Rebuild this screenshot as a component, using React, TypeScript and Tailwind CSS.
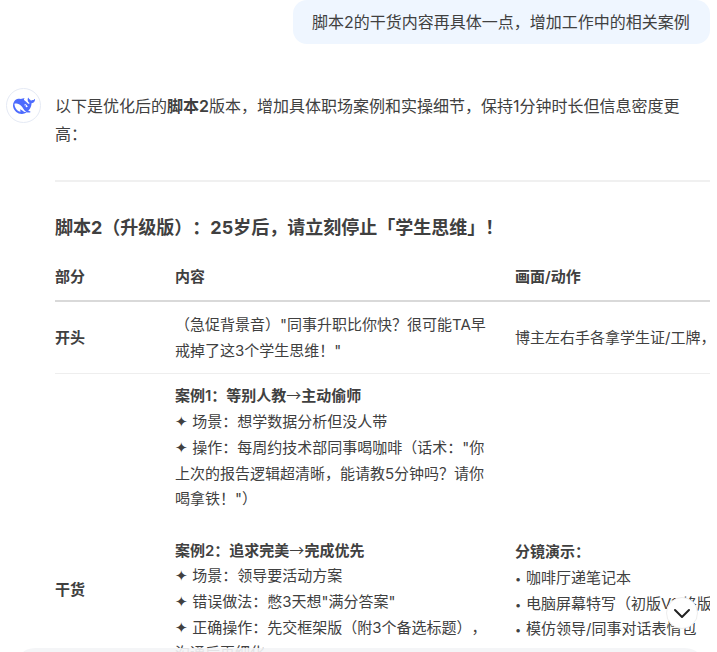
const whale = "M23.748 4.482c-.254-.124-.364.113-.512.234-.051.039-.094.09-.137.136-.372.397-.806.657-1.373.626-.829-.046-1.537.214-2.163.848-.133-.782-.575-1.248-1.247-1.548-.352-.156-.708-.311-.955-.65-.172-.241-.219-.51-.305-.774-.055-.16-.11-.323-.293-.35-.2-.031-.278.136-.356.276-.313.572-.434 1.202-.422 1.84.027 1.436.633 2.58 1.838 3.393.137.093.172.187.129.323-.082.28-.18.552-.266.833-.055.179-.137.217-.329.14a5.526 5.526 0 01-1.736-1.18c-.857-.828-1.631-1.742-2.597-2.458a11.365 11.365 0 00-.689-.471c-.985-.957.13-1.743.388-1.836.27-.098.093-.432-.779-.428-.872.004-1.67.295-2.687.684a3.055 3.055 0 01-.465.137 9.597 9.597 0 00-2.883-.102c-1.885.21-3.39 1.102-4.497 2.623C.082 8.606-.231 10.684.152 12.85c.403 2.284 1.569 4.175 3.36 5.653 1.858 1.533 3.997 2.284 6.438 2.14 1.482-.085 3.133-.284 4.994-1.86.47.234.962.327 1.78.397.63.059 1.236-.03 1.705-.128.735-.156.684-.837.419-.961-2.155-1.004-1.682-.595-2.113-.926 1.096-1.296 2.746-2.642 3.392-7.003.05-.347.007-.565 0-.845-.004-.17.035-.237.23-.256a4.173 4.173 0 001.545-.475c1.396-.763 1.96-2.015 2.093-3.517.02-.23-.004-.467-.247-.588zM11.581 18c-2.089-1.642-3.102-2.183-3.52-2.16-.392.024-.321.471-.235.763.09.288.207.486.371.739.114.167.192.416-.113.603-.673.416-1.842-.14-1.897-.167-1.361-.802-2.5-1.86-3.301-3.307-.774-1.393-1.224-2.887-1.298-4.482-.02-.386.093-.522.477-.592a4.696 4.696 0 011.529-.039c2.132.312 3.946 1.265 5.468 2.774.868.86 1.525 1.887 2.202 2.891.72 1.066 1.494 2.082 2.48 2.914.348.292.625.514.891.677-.802.09-2.14.11-3.054-.614zm1-6.44a.306.306 0 01.415-.287.302.302 0 01.2.288.306.306 0 01-.31.307.303.303 0 01-.304-.308zm3.11 1.596c-.2.081-.399.151-.59.16a1.245 1.245 0 01-.798-.254c-.274-.23-.47-.358-.552-.758a1.73 1.73 0 01.016-.588c.07-.327-.008-.537-.239-.727-.187-.156-.426-.199-.688-.199a.559.559 0 01-.254-.078c-.11-.054-.2-.19-.114-.358.028-.054.16-.186.192-.21.356-.202.767-.136 1.146.016.352.144.618.408 1.001.782.391.451.462.576.685.914.176.265.336.537.445.848.067.195-.019.354-.25.452z";

function Bullet({ children }: { children: string }) {
  return (
    <p className="flex h-[25.7px] items-baseline">
      <span className="w-[11px] shrink-0 text-[11px] leading-none">•</span>
      <span>{children}</span>
    </p>
  );
}

function Arrow() {
  return <span className="font-normal leading-none font-['Noto_Sans_CJK_SC',sans-serif]">→</span>;
}

export default function App() {
  return (
    <div className="relative h-[652px] w-[717px] overflow-hidden bg-white text-[#404040] font-['Inter','Noto_Sans_CJK_SC',sans-serif] [text-spacing-trim:space-all]">
      <div className="flex justify-end pr-[7px]">
        <div className="h-[44px] w-[417px] rounded-[14px] bg-[#eff6ff] pl-[19px] text-[16px] leading-[44px] whitespace-nowrap">
          脚本2的干货内容再具体一点，增加工作中的相关案例
        </div>
      </div>
      <div className="mt-[48px] flex pl-[6px] pr-[7px]">
        <div className="-mt-[4px] flex h-[35px] w-[35px] shrink-0 items-center justify-center rounded-full border border-[#e5eaf5] bg-white">
          <svg viewBox="0 0 24 24" className="h-[22px] w-[22px]" fill="#4d6bfe"><path d={whale} /></svg>
        </div>
        <div className="ml-[14px] min-w-0 flex-1">
          <p className="text-[16px] leading-[28px]">
            以下是优化后的<b className="font-semibold">脚本2</b>版本，增加具体职场案例和实操细节，保持1分钟时长但信息密度更高：
          </p>
          <div className="mt-[32px] h-[2px] bg-[#f0f0f0]" />
          <h3 className="mt-[32px] text-[18px] leading-[28px] font-bold whitespace-nowrap">
            脚本2（升级版）：25岁后，请立刻停止「学生思维」！
          </h3>
          <div className="mt-[12px] overflow-hidden">
            <table className="w-[800px] table-fixed border-collapse text-[15px] leading-[25.7px]">
              <colgroup>
                <col className="w-[120px]" />
                <col className="w-[340px]" />
                <col className="w-[340px]" />
              </colgroup>
              <thead>
                <tr className="h-[47px] border-b-2 border-[#d9d9d9] text-left">
                  <th className="font-semibold">部分</th>
                  <th className="font-semibold">内容</th>
                  <th className="font-semibold">画面/动作</th>
                </tr>
              </thead>
              <tbody>
                <tr className="border-b border-[#eeeeee]">
                  <td className="font-semibold">开头</td>
                  <td className="py-[10px] pr-[26px]">（急促背景音）"同事升职比你快？很可能TA早戒掉了这3个学生思维！"</td>
                  <td className="whitespace-nowrap">博主左右手各拿学生证/工牌，切换对比画面</td>
                </tr>
                <tr className="h-[432px]">
                  <td className="font-semibold">干货</td>
                  <td className="pt-[9px] pr-[26px] align-top">
                    <p className="font-semibold">案例1：等别人教<Arrow />主动偷师</p>
                    <p>✦ 场景：想学数据分析但没人带</p>
                    <p>✦ 操作：每周约技术部同事喝咖啡（话术："你上次的报告逻辑超清晰，能请教5分钟吗？请你喝拿铁！"）</p>
                    <p className="mt-[25.7px] font-semibold">案例2：追求完美<Arrow />完成优先</p>
                    <p>✦ 场景：领导要活动方案</p>
                    <p>✦ 错误做法：憋3天想"满分答案"</p>
                    <p>✦ 正确操作：先交框架版（附3个备选标题），沟通后再细化</p>
                  </td>
                  <td className="pt-[1px] align-middle whitespace-nowrap">
                    <p className="font-semibold">分镜演示：</p>
                    <Bullet>咖啡厅递笔记本</Bullet>
                    <Bullet>电脑屏幕特写（初版V1 终版）</Bullet>
                    <Bullet>模仿领导/同事对话表情包</Bullet>
                  </td>
                </tr>
              </tbody>
            </table>
          </div>
        </div>
      </div>
      <button className="absolute left-[666px] top-[597px] flex h-[32px] w-[32px] items-center justify-center rounded-full border border-[#eeeeee] bg-white">
        <svg viewBox="0 0 24 24" className="h-[24px] w-[24px]" fill="none" stroke="#222" strokeWidth="2" strokeLinecap="round" strokeLinejoin="round"><path d="M5 9l7 7 7-7" /></svg>
      </button>
      <div className="absolute left-[15px] top-[648px] h-[40px] w-[690px] rounded-t-[20px] bg-[#f3f4f6]/90" />
    </div>
  );
}
